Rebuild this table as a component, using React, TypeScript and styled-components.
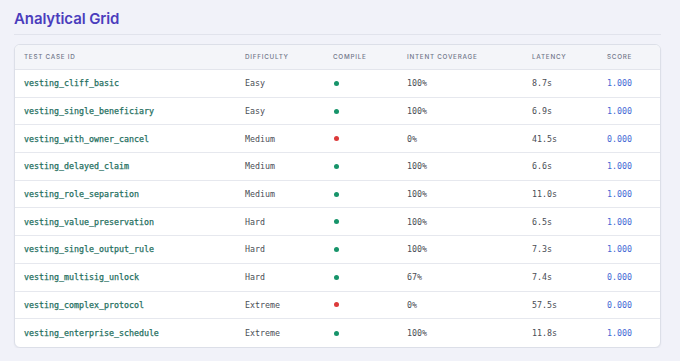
import styled, { createGlobalStyle } from 'styled-components';

const GlobalStyle = createGlobalStyle`
  html, body {
    margin: 0;
    padding: 0;
    background: #f1f2f9;
  }
  * {
    box-sizing: border-box;
  }
`;

type Row = {
  id: string;
  difficulty: string;
  compiled: boolean;
  coverage: string;
  latency: string;
  score: string;
};

const rows: Row[] = [
  { id: 'vesting_cliff_basic', difficulty: 'Easy', compiled: true, coverage: '100%', latency: '8.7s', score: '1.000' },
  { id: 'vesting_single_beneficiary', difficulty: 'Easy', compiled: true, coverage: '100%', latency: '6.9s', score: '1.000' },
  { id: 'vesting_with_owner_cancel', difficulty: 'Medium', compiled: false, coverage: '0%', latency: '41.5s', score: '0.000' },
  { id: 'vesting_delayed_claim', difficulty: 'Medium', compiled: true, coverage: '100%', latency: '6.6s', score: '1.000' },
  { id: 'vesting_role_separation', difficulty: 'Medium', compiled: true, coverage: '100%', latency: '11.0s', score: '1.000' },
  { id: 'vesting_value_preservation', difficulty: 'Hard', compiled: true, coverage: '100%', latency: '6.5s', score: '1.000' },
  { id: 'vesting_single_output_rule', difficulty: 'Hard', compiled: true, coverage: '100%', latency: '7.3s', score: '1.000' },
  { id: 'vesting_multisig_unlock', difficulty: 'Hard', compiled: true, coverage: '67%', latency: '7.4s', score: '0.000' },
  { id: 'vesting_complex_protocol', difficulty: 'Extreme', compiled: false, coverage: '0%', latency: '57.5s', score: '0.000' },
  { id: 'vesting_enterprise_schedule', difficulty: 'Extreme', compiled: true, coverage: '100%', latency: '11.8s', score: '1.000' },
];

const COLUMNS = '221px 88px 74px 125px 75px 1fr';

const Page = styled.div`
  padding: 9px 19px 0 14px;
  font-family: Inter, 'Noto Sans', sans-serif;
`;

const Title = styled.h1`
  margin: 0;
  font-size: 15px;
  line-height: 19px;
  font-weight: 600;
  color: #4b3dbd;
  letter-spacing: -0.1px;
  padding-bottom: 6px;
  border-bottom: 1px solid #e1e3ec;
`;

const Card = styled.div`
  margin-top: 9px;
  background: #ffffff;
  border: 1px solid #dcdfe8;
  border-radius: 6px;
  overflow: hidden;
  box-shadow: 0 1px 2px rgba(30, 35, 60, 0.06);
`;

const HeaderRow = styled.div`
  display: grid;
  grid-template-columns: ${COLUMNS};
  align-items: center;
  height: 25px;
  padding-left: 9px;
  background: #f4f5f9;
  border-bottom: 1px solid #e3e5ec;
`;

const HeaderCell = styled.div`
  font-size: 6.3px;
  font-weight: 500;
  letter-spacing: 0.75px;
  text-transform: uppercase;
  color: #72778a;
`;

const DataRow = styled.div<{ last?: boolean }>`
  display: grid;
  grid-template-columns: ${COLUMNS};
  align-items: center;
  height: 27.7px;
  padding-left: 9px;
  border-bottom: ${p => (p.last ? 'none' : '1px solid #e6e8ee')};
`;

const Cell = styled.div<{ tone?: 'id' | 'plain' | 'score' }>`
  font-family: 'DejaVu Sans Mono', 'Liberation Mono', monospace;
  font-size: 8.3px;
  color: ${p =>
    p.tone === 'id' ? '#26705f' : p.tone === 'score' ? '#4467d4' : '#4a4d55'};
  -webkit-text-stroke: ${p => (p.tone === 'id' ? '0.25px' : '0')};
  white-space: nowrap;
`;

const Dot = styled.span<{ ok: boolean }>`
  display: block;
  width: 5px;
  height: 5px;
  margin-left: 1px;
  border-radius: 50%;
  background: ${p => (p.ok ? '#17946a' : '#dc3a3a')};
`;

export default function App() {
  return (
    <>
      <GlobalStyle />
      <Page>
        <Title>Analytical Grid</Title>
        <Card>
          <HeaderRow>
            <HeaderCell>Test Case ID</HeaderCell>
            <HeaderCell>Difficulty</HeaderCell>
            <HeaderCell>Compile</HeaderCell>
            <HeaderCell>Intent Coverage</HeaderCell>
            <HeaderCell>Latency</HeaderCell>
            <HeaderCell>Score</HeaderCell>
          </HeaderRow>
          {rows.map((r, i) => (
            <DataRow key={r.id} last={i === rows.length - 1}>
              <Cell tone="id">{r.id}</Cell>
              <Cell>{r.difficulty}</Cell>
              <div>
                <Dot ok={r.compiled} />
              </div>
              <Cell>{r.coverage}</Cell>
              <Cell>{r.latency}</Cell>
              <Cell tone="score">{r.score}</Cell>
            </DataRow>
          ))}
        </Card>
      </Page>
    </>
  );
}
